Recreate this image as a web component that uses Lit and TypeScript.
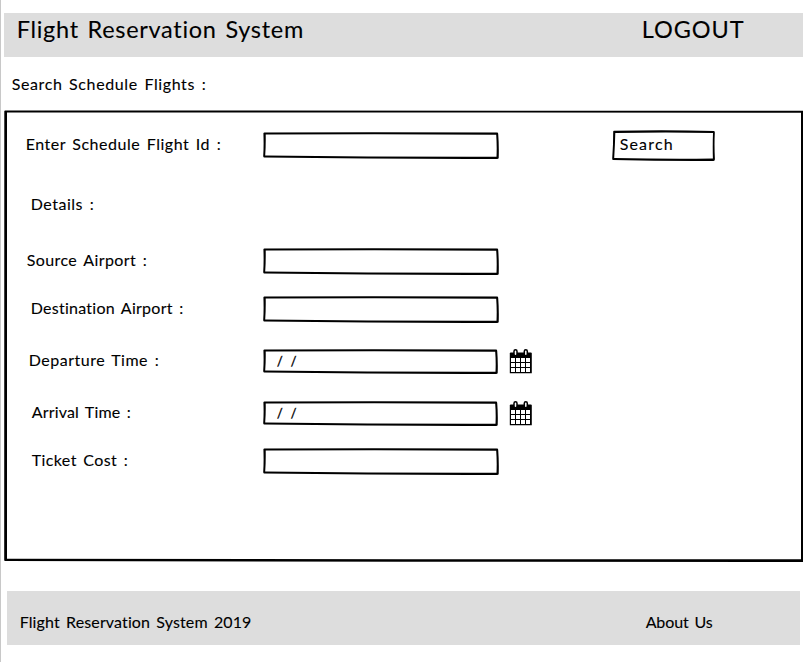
import { LitElement, html, svg, css } from "lit";
import { customElement, property } from "lit/decorators.js";

/** Text whose tracking is adjusted so that the line fills a given width. */
@customElement("fit-text")
class FitText extends LitElement {
  @property() text = "";
  @property({ type: Number }) width = 0;

  static styles = css`
    :host { display: block; white-space: nowrap; }
    .run { display: inline-block; white-space: pre; word-spacing: 2px; margin-left: 0.7px; }
  `;

  firstUpdated() {
    const run = this.renderRoot.querySelector(".run") as HTMLElement;
    const natural = run.getBoundingClientRect().width;
    const spacing = (this.width - natural) / (this.text.length - 1);
    run.style.letterSpacing = `${spacing.toFixed(3)}px`;
  }

  render() {
    return html`<span class="run">${this.text}</span>`;
  }
}

/** Hand-drawn rectangle around its slotted content. */
@customElement("sketch-box")
class SketchBox extends LitElement {
  @property({ type: Number }) w = 236;
  @property({ type: Number }) h = 27;
  @property() kind = "input";

  static styles = css`
    :host { display: grid; }
    .frame, .content { grid-area: 1 / 1; min-width: 0; }
    .frame { display: block; }
  `;

  outline() {
    const { w, h } = this;
    if (this.kind === "panel") {
      return `M.3 1.2Q.3 .4 1.2 .4L${w} .8V${h}L${w / 2} ${h - 0.3}L1 ${h - 1}Q.3 ${h - 1} .2 ${h - 2}Z
        M3 2.6V${h - 3.2}L${w / 2} ${h - 2.7}L${w - 2} ${h - 2.7}V2.8L${w / 2} 2.4Z`;
    }
    if (this.kind === "button") {
      return `M1.2 1.5Q1.3 .9 2 .8Q${w / 2} -.2 ${w - 1} .9Q${w} 1 ${w - 0.2} 3Q${w - 0.8} ${h / 2} ${w - 0.1} ${h - 2}Q${w} ${h} ${w - 1.5} ${h}Q${w / 2} ${h + 0.1} 1 ${h - 0.9}Q.2 ${h - 1} .2 ${h - 2.5}Q1.2 ${h / 2} 1.2 1.5Z
        M3.3 3.1Q3 ${h / 2} 2.2 ${h - 3}Q${w / 2} ${h - 1.8} ${w - 2.1} ${h - 2.4}Q${w - 2.5} ${h / 2} ${w - 2} 3Q${w / 2} 1.8 3.3 3.1Z`;
    }
    return `M.4 1.3Q.6 .6 1.4 .5Q${w / 2} -.2 ${w - 1.6} .6Q${w - 0.8} .8 ${w - 0.8} 2Q${w + 0.1} ${h / 2} ${w - 0.3} ${h - 1}Q${w - 0.4} ${h} ${w - 2} ${h}Q${w / 2} ${h + 0.1} 1 ${h - 1.4}Q.2 ${h - 1.6} .2 ${h - 3}Q.9 ${h / 2} .4 1.3Z
      M2.7 2.6Q2.9 ${h / 2} 2.2 ${h - 3.6}Q${w / 2} ${h - 2} ${w - 2.5} ${h - 2.2}Q${w - 2} ${h / 2} ${w - 2.8} 2.7Q${w / 2} 1.7 2.7 2.6Z`;
  }

  render() {
    return html`
      <svg class="frame" width=${this.w} height=${this.h} aria-hidden="true">
        <path d=${this.outline()} fill="#000" fill-rule="evenodd" />
      </svg>
      <div class="content"><slot></slot></div>
    `;
  }
}

const calendar = html`
  <svg width="24" height="26" viewBox="0 0 24 26" aria-label="Pick a date">
    <path d="M.8 5.6Q.8 4.6 1.8 4.6H21.8Q22.8 4.6 22.8 5.6V25.3H.8Z" fill="#000" />
    ${[10, 15, 20].map((y) =>
      [2, 7, 12, 17].map((x) => svg`<rect x=${x} y=${y} width="4" height="4" fill="#fff" />`)
    )}
    ${[5, 15.3].map(
      (x) => svg`<rect x=${x} y="1.8" width="3" height="6" rx="1.5" fill="#fff" stroke="#000" stroke-width="1.5" />`
    )}
  </svg>
`;

interface Field {
  label: string;
  width: number;
  indent: number;
  date?: boolean;
}

const fields: Field[] = [
  { label: "Source Airport :", width: 120, indent: 22 },
  { label: "Destination Airport :", width: 153, indent: 26 },
  { label: "Departure Time :", width: 130, indent: 24, date: true },
  { label: "Arrival Time :", width: 99, indent: 27, date: true },
  { label: "Ticket Cost :", width: 96, indent: 27 },
];

@customElement("app-root")
class AppRoot extends LitElement {
  static styles = css`
    :host {
      display: flex;
      flex-direction: column;
      box-sizing: border-box;
      height: 662px;
      width: 803px;
      overflow: hidden;
      border-left: 1px solid #c8c8c8;
      padding: 13px 0 0 3px;
      background: #fff;
      color: #000;
      font: 16px/26px Lato, "Open Sans", sans-serif;
      -webkit-text-stroke: 0.1px #000;
    }
    .bar {
      display: grid;
      background: #ddd;
      flex: none;
    }
    .header {
      height: 44px;
      grid-template-columns: 625px 1fr;
      padding-left: 12px;
      font-size: 23.5px;
      line-height: 33px;
    }
    .heading { height: 53px; padding: 14px 0 0 7px; box-sizing: border-box; }
    .form {
      display: grid;
      grid-template-columns: 259px 246px 103px 1fr;
      grid-template-rows: 59px 57px 48px 52px 52px 48px 28px;
      padding-top: 21px;
      align-items: start;
    }
    .label { grid-column: 1; }
    .first { padding-left: 21px; }
    .details { padding: 1px 0 0 26px; }
    .field { grid-column: 2; padding-top: 1px; }
    .date { padding-top: 2px; }
    .pick { grid-column: 3; padding-top: 1px; line-height: 0; }
    .search { grid-column: 4; margin-top: -1px; }
    .caption { padding: 1px 0 0 7px; }
    .slashes { padding: 0 0 0 14px; font-size: 12.5px; line-height: 25px; word-spacing: 5px; -webkit-text-stroke: 0.4px #000; }
    .footer {
      height: 54px;
      margin: 29px 3px 0 3px;
      grid-template-columns: 626px 1fr;
      padding-left: 12px;
      box-sizing: border-box;
      padding-top: 18px;
    }
    .i22 { padding-left: 22px; }
    .i24 { padding-left: 24px; }
    .i26 { padding-left: 26px; }
    .i27 { padding-left: 27px; }
  `;

  render() {
    return html`
      <header class="bar header">
        <fit-text text="Flight Reservation System" width="287"></fit-text>
        <fit-text text="LOGOUT" width="102"></fit-text>
      </header>
      <div class="heading"><fit-text text="Search Schedule Flights :" width="194"></fit-text></div>
      <sketch-box kind="panel" w="799" h="452">
        <div class="form">
          <fit-text class="label first" text="Enter Schedule Flight Id :" width="195"></fit-text>
          <sketch-box class="field"></sketch-box>
          <sketch-box class="search" kind="button" w="103" h="31">
            <fit-text class="caption" text="Search" width="53"></fit-text>
          </sketch-box>
          <fit-text class="label details" text="Details :" width="63"></fit-text>
          ${fields.map(
            (f) => html`
              <fit-text class="label i${f.indent}" text=${f.label} width=${f.width}></fit-text>
              ${f.date
                ? html`
                    <sketch-box class="field date" w="235" h="25"><div class="slashes">/ /</div></sketch-box>
                    <div class="pick">${calendar}</div>
                  `
                : html`<sketch-box class="field"></sketch-box>`}
            `
          )}
        </div>
      </sketch-box>
      <footer class="bar footer">
        <fit-text text="Flight Reservation System 2019" width="232"></fit-text>
        <fit-text text="About Us" width="67"></fit-text>
      </footer>
    `;
  }
}
